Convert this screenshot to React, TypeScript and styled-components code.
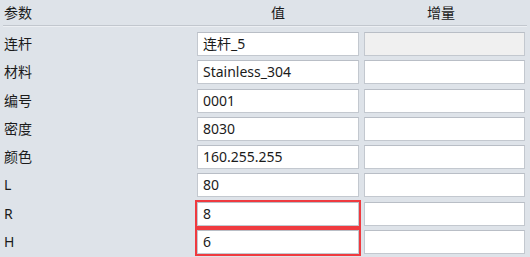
import React from "react";
import styled, { createGlobalStyle } from "styled-components";

const Global = createGlobalStyle`
  html, body { margin: 0; padding: 0; background: #dee3e9; }
  body { font-family: "Noto Sans", "Noto Sans CJK SC", sans-serif; font-size: 14px; color: #1b1b1b; }
`;

const Panel = styled.div`
  width: 530px;
  height: 257px;
  background: #dee3e9;
  box-sizing: border-box;
  overflow: hidden;
`;

const HeaderBar = styled.div`
  padding: 0 3px;
`;

const Header = styled.div`
  display: grid;
  grid-template-columns: 189px 162px 158px;
  column-gap: 5px;
  height: 25px;
  align-items: center;
  border-bottom: 1px solid #c2c7ce;
  box-shadow: 0 1px 0 #eceff3;
`;

const HeadCell = styled.div<{ $center?: boolean; $shift?: number }>`
  padding-left: ${(p) => (p.$center ? 0 : 1)}px;
  text-align: ${(p) => (p.$center ? "center" : "left")};
  padding-right: ${(p) => p.$shift ?? 0}px;
  line-height: 25px;
  color: #1b1b1b;
`;

const Body = styled.div`
  display: flex;
  flex-direction: column;
  gap: 4.25px;
  padding-top: 6px;
`;

const Row = styled.div`
  display: grid;
  grid-template-columns: 192px 162px 161px;
  column-gap: 5px;
  height: 24px;
  align-items: center;
`;

const Label = styled.div`
  padding-left: 4px;
  line-height: 24px;
`;

const Field = styled.div<{ $disabled?: boolean; $marked?: boolean }>`
  box-sizing: border-box;
  height: 24px;
  border: 1px solid #c3c8cf;
  border-top-color: #b9bec6;
  background: ${(p) => (p.$disabled ? "#f0f0f0" : "#ffffff")};
  padding-left: 5px;
  line-height: 22px;
  white-space: nowrap;
  outline: ${(p) => (p.$marked ? "2px solid #ef3a3f" : "none")};
  outline-offset: 0px;
`;

type RowData = { label: string; value: string; disabled?: boolean; marked?: boolean };

const rows: RowData[] = [
  { label: "连杆", value: "连杆_5", disabled: true },
  { label: "材料", value: "Stainless_304" },
  { label: "编号", value: "0001" },
  { label: "密度", value: "8030" },
  { label: "颜色", value: "160.255.255" },
  { label: "L", value: "80" },
  { label: "R", value: "8", marked: true },
  { label: "H", value: "6", marked: true },
];

export default function App() {
  return (
    <Panel>
      <Global />
      <HeaderBar>
        <Header>
          <HeadCell>参数</HeadCell>
          <HeadCell $center>值</HeadCell>
          <HeadCell $center $shift={4}>增量</HeadCell>
        </Header>
      </HeaderBar>
      <Body>
        {rows.map((r) => (
          <Row key={r.label}>
            <Label>{r.label}</Label>
            <Field $marked={r.marked}>{r.value}</Field>
            <Field $disabled={r.disabled} />
          </Row>
        ))}
      </Body>
    </Panel>
  );
}
